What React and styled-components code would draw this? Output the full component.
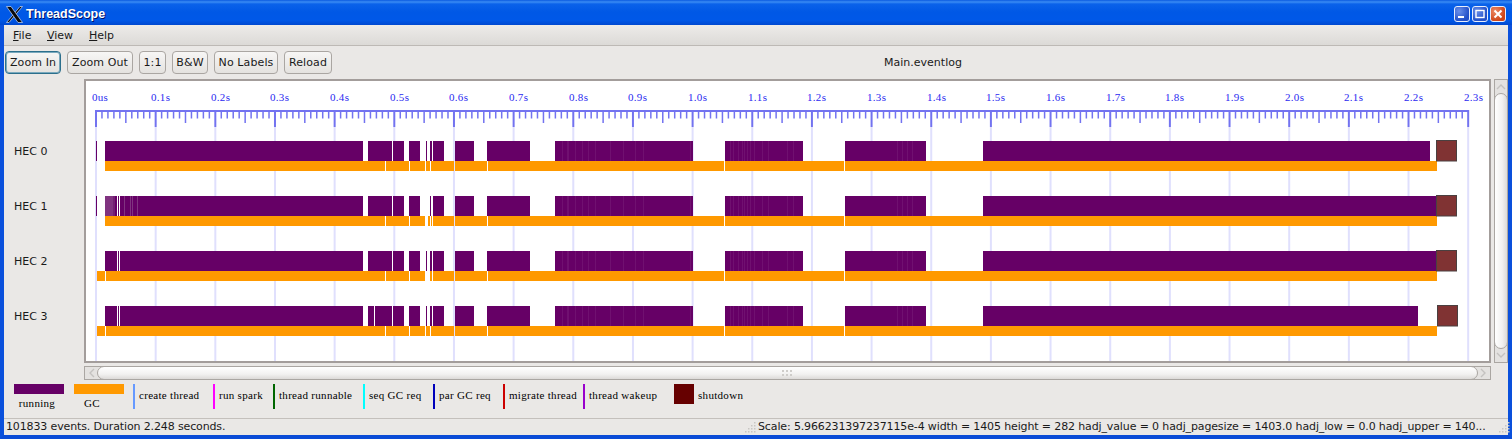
import React from 'react';
import styled, { createGlobalStyle } from 'styled-components';

const GlobalStyle = createGlobalStyle`
  html, body { margin: 0; padding: 0; background: #eae8e6; overflow: hidden; }
`;

const Window = styled.div`
  width: 1512px;
  height: 439px;
  box-sizing: border-box;
  display: flex;
  flex-direction: column;
  font-family: "DejaVu Sans", sans-serif;
  font-size: 11px;
  color: #1a1a1a;
  background: #eae8e6;
  border-left: 4px solid #0a50dc;
  border-right: 4px solid #0a50dc;
  border-bottom: 4px solid #0a4bd6;
`;

const TitleBar = styled.div`
  height: 25px;
  margin: 0 -4px;
  flex: none;
  box-sizing: border-box;
  display: flex;
  align-items: center;
  padding: 3px 6px 0;
  gap: 3px;
  background: linear-gradient(#0a5ae0 0, #3a8cf4 2px, #0a62ea 4px, #0058e6 12px, #0058e8 20px, #0048d0 25px);
`;

const WindowTitle = styled.div`
  flex: 1;
  color: #fff;
  font-family: "Liberation Sans", sans-serif;
  font-weight: bold;
  font-size: 12.5px;
  text-shadow: 1px 1px 0 #00126a;
`;

const WinButtons = styled.div`
  display: flex;
  gap: 2px;
`;

const WinButton = styled.div`
  width: 16px;
  height: 16px;
  box-sizing: border-box;
  border: 1px solid #e8eefc;
  border-radius: 3px;
  display: flex;
  align-items: center;
  justify-content: center;
  background: ${(p) => (p.$close
    ? 'radial-gradient(circle at 30% 30%, #ec8a66, #cf4518 70%)'
    : 'radial-gradient(circle at 30% 30%, #6a90ea, #2350c8 70%)')};
`;

const MenuBar = styled.div`
  height: 21px;
  flex: none;
  box-sizing: border-box;
  display: flex;
  align-items: center;
  padding-left: 9px;
  background: linear-gradient(#edebe9, #dcdad7);
  border-bottom: 1px solid #bdb9b5;
`;

const MenuItem = styled.div`
  width: ${(p) => p.$w}px;
  u { text-underline-offset: 1px; }
`;

const ToolBar = styled.div`
  height: 33px;
  flex: none;
  box-sizing: border-box;
  display: flex;
  align-items: center;
  gap: 6px;
  padding-left: 1px;
`;

const ToolButton = styled.button`
  height: 23px;
  width: ${(p) => p.$w}px;
  padding: 0;
  box-sizing: border-box;
  font: 11px "DejaVu Sans", sans-serif;
  letter-spacing: 0.1px;
  color: #1a1a1a;
  border-radius: 4px;
  background: linear-gradient(#f7f6f5, #e4e2df);
  border: 1px solid ${(p) => (p.$focused ? '#2c6f8c' : '#aaa6a2')};
  box-shadow: ${(p) => (p.$focused ? '0 0 0 1px #7aa9bd inset' : 'none')};
`;

const FileName = styled.div`
  flex: 1;
  text-align: center;
`;

const ChartRow = styled.div`
  height: 284px;
  flex: none;
  display: flex;
`;

const RowLabels = styled.div`
  width: 80px;
  flex: none;
  box-sizing: border-box;
  padding: 45px 0 0 10px;
`;

const RowLabel = styled.div`
  height: 55px;
  line-height: 55px;
`;

const ChartFrame = styled.div`
  width: 1407px;
  height: 284px;
  box-sizing: border-box;
  border: 2px solid #a39d9b;
  background: #fff;
  flex: none;
  svg { display: block; }
`;

const VScroll = styled.div`
  width: 14px;
  height: 284px;
  margin-left: 3px;
  box-sizing: border-box;
  border: 1px solid #aaa6a2;
  flex: none;
  position: relative;
  background: #e4e2e0;
`;

const VThumb = styled.div`
  position: absolute;
  left: -1px;
  right: -1px;
  top: 13px;
  bottom: 13px;
  border: 1px solid #aaa6a2;
  border-radius: 7px;
  background: linear-gradient(90deg, #fff, #f2f1f0 60%, #dcdad8);
`;

const HScrollRow = styled.div`
  flex: none;
  padding: 3px 0 0 80px;
`;

const HScroll = styled.div`
  width: 1407px;
  height: 14px;
  box-sizing: border-box;
  border: 1px solid #aaa6a2;
  position: relative;
  background: #e4e2e0;
`;

const HThumb = styled.div`
  position: absolute;
  top: -1px;
  bottom: -1px;
  left: 12px;
  right: 12px;
  border: 1px solid #aaa6a2;
  border-radius: 7px;
  background: linear-gradient(#fff, #f2f1f0 60%, #dcdad8);
  display: flex;
  align-items: center;
  justify-content: center;
`;

const Chevron = styled.svg`
  position: absolute;
  top: ${(p) => p.$top};
  left: ${(p) => p.$left};
  right: ${(p) => p.$right};
  bottom: ${(p) => p.$bottom};
`;

const Legend = styled.div`
  height: 38px;
  flex: none;
  box-sizing: border-box;
  display: flex;
  padding: 4px 0 0 10px;
  font-family: "Liberation Serif", serif;
  font-size: 11px;
  letter-spacing: 0.3px;
  color: #000;
`;

const Swatch = styled.div`
  width: 50px;
  margin-right: 10px;
  box-sizing: border-box;
  padding: 0 ${(p) => p.$indent || 0}px 0 0;
  text-align: center;
  line-height: 13px;
  &::before {
    content: "";
    display: block;
    width: 50px;
    height: 10px;
    background: ${(p) => p.$color};
    margin-bottom: 3px;
  }
`;

const Marker = styled.div`
  width: ${(p) => p.$w}px;
  height: 25px;
  box-sizing: border-box;
  border-left: 2px solid ${(p) => p.$color};
  padding-left: 4px;
  line-height: 22px;
  margin-left: ${(p) => p.$offset || 0}px;
  white-space: nowrap;
`;

const ShutdownKey = styled.div`
  display: flex;
  gap: 4px;
  line-height: 22px;
  &::before {
    content: "";
    width: 20px;
    height: 20px;
    background: #660000;
  }
`;

const StatusBar = styled.div`
  height: 17px;
  flex: none;
  box-sizing: border-box;
  display: flex;
  align-items: center;
  border-top: 1px solid #c4c0bc;
  padding: 0 0 1px 2px;
  letter-spacing: -0.13px;
  white-space: nowrap;
`;

const StatusLeft = styled.div`
  width: 738px;
  flex: none;
`;

const StatusRight = styled.div`
  width: 740px;
  flex: none;
  margin-left: 2px;
`;

const Grip = styled.svg`
  flex: none;
`;

// bars in page pixels: [from, to]
const commonEnd = [[455, 474], [487, 530], [555, 693], [725, 803], [845, 926]];
const purple = [
  [[96, 97], [105, 363], [368, 392], [393, 404], [409, 420], [426, 427], [430, 432], [433, 444], ...commonEnd, [983, 1430]],
  [[96, 97], [120, 363], [368, 392], [393, 404], [409, 420], [430, 431], [433, 444], ...commonEnd, [983, 1437]],
  [[105, 117], [118, 119], [120, 363], [368, 392], [393, 404], [409, 420], [426, 427], [430, 432], [433, 444], ...commonEnd, [983, 1437]],
  [[105, 117], [118, 119], [120, 363], [368, 374], [375, 392], [393, 404], [409, 420], [426, 427], [430, 432], [433, 444], ...commonEnd, [983, 1418]],
];

const orangeTail = [[455, 487], [488, 724], [725, 844], [845, 1437]];
const orange = [
  [[105, 385], [386, 409], [410, 425], [426, 430], [431, 454], ...orangeTail],
  [[105, 385], [386, 409], [410, 425], [428, 430], [431, 432], [433, 454], ...orangeTail],
  [[97, 105], [106, 385], [386, 409], [410, 425], [430, 432], [433, 454], ...orangeTail],
  [[97, 105], [106, 385], [386, 409], [410, 425], [426, 430], [431, 454], ...orangeTail],
];

const streaks = [562, 567, 568, 575, 582, 588, 595, 610, 623, 635, 643, 690, 730, 733, 738, 742, 744, 747, 750, 754, 762, 768, 787, 793, 897, 902, 907, 912];
const rowTops = [141, 196, 251, 306];
const shutdownX = [1436, 1436, 1436, 1437];
const ticks = Array.from({ length: 231 }, (_, i) => i);
const tickX = (i) => 96 + i * 5.966;
const tickLabel = (i) => (i === 0 ? '0us' : `${(i / 100).toFixed(1)}s`);

function Timeline() {
  return (
    <svg width="1403" height="280" viewBox="86 81 1403 280">
      {ticks.filter((i) => i % 10 === 0).map((i) => (
        <g key={i}>
          <rect x={tickX(i) - 1} y="127" width="2" height="240" fill="#e0e0fd" />
          <text x={Math.floor(tickX(i)) - 4} y="101" fontFamily="Liberation Serif, serif" fontSize="11" letterSpacing="0.3" fill="#2a2af0">
            {tickLabel(i)}
          </text>
        </g>
      ))}
      <rect x="95" y="110" width="1374" height="2" fill="#7373f0" />
      {ticks.map((i) => {
        const major = i % 10 === 0;
        const end = major ? 127 : i % 5 === 0 ? 123 : 118.5;
        return <rect key={i} x={tickX(i) - (major ? 1 : 0.75)} y="110" width={major ? 2 : 1.5} height={end - 110} fill="#7373f0" />;
      })}
      {rowTops.map((top, r) => (
        <g key={top}>
          {purple[r].map(([a, b]) => <rect key={a} x={a} y={top} width={b - a} height="20" fill="#660066" />)}
          {r === 1 && (
            <>
              <rect x="105" y={top} width="8" height="20" fill="#803380" />
              <rect x="113" y={top} width="2" height="20" fill="#732073" />
              <rect x="115" y={top} width="2" height="20" fill="#660066" />
              <rect x="118" y={top} width="1" height="20" fill="#660066" />
              {[124, 130, 132, 137].map((x) => <rect key={x} x={x} y={top} width="1" height="20" fill="#803380" />)}
            </>
          )}
          {streaks.map((x) => <rect key={x} x={x} y={top} width="1" height="20" fill="#701070" />)}
          {orange[r].map(([a, b]) => <rect key={a} x={a} y={top + 20} width={b - a} height="10" fill="#ff9900" />)}
          <rect x={shutdownX[r] + 0.5} y={top - 0.5} width="20" height="20.5" fill="#803333" stroke="#4a4040" />
        </g>
      ))}
    </svg>
  );
}

const chevronProps = { width: 10, height: 8, fill: 'none', stroke: '#c4c2c0', strokeWidth: 1.4 };
const gripDots = [[10, 2], [7, 5], [10, 5], [4, 8], [7, 8], [10, 8], [1, 11], [4, 11], [7, 11], [10, 11]];

function ResizeGrip() {
  return (
    <Grip width="12" height="12" viewBox="0 0 12 12" fill="#c8c6c3">
      {gripDots.map(([x, y]) => <rect key={`${x}-${y}`} x={x} y={y - 1} width="1.5" height="1.5" />)}
    </Grip>
  );
}

export default function App() {
  return (
    <Window>
      <GlobalStyle />
      <TitleBar>
        <svg width="17" height="17" viewBox="0 0 17 17">
          <g fill="#0a0a0a" stroke="#cfdcf6" strokeWidth="0.7">
            <path d="M14 0.5H16.5L3 16.5H0.5Z" />
            <path d="M0.5 0.5H5L16.5 16.5H12Z" />
          </g>
        </svg>
        <WindowTitle>ThreadScope</WindowTitle>
        <WinButtons>
          <WinButton>
            <svg width="10" height="10" viewBox="0 0 10 10"><rect x="1" y="7" width="6" height="2" fill="#fff" /></svg>
          </WinButton>
          <WinButton>
            <svg width="10" height="10" viewBox="0 0 10 10"><rect x="1" y="1.5" width="8" height="7" fill="none" stroke="#fff" strokeWidth="1.4" /></svg>
          </WinButton>
          <WinButton $close>
            <svg width="10" height="10" viewBox="0 0 10 10"><path d="M1.5 1.5L8.5 8.5M8.5 1.5L1.5 8.5" stroke="#fff" strokeWidth="2" /></svg>
          </WinButton>
        </WinButtons>
      </TitleBar>
      <MenuBar>
        <MenuItem $w={34}><u>F</u>ile</MenuItem>
        <MenuItem $w={42}><u>V</u>iew</MenuItem>
        <MenuItem $w={40}><u>H</u>elp</MenuItem>
      </MenuBar>
      <ToolBar>
        <ToolButton $w={56} $focused>Zoom In</ToolButton>
        <ToolButton $w={66}>Zoom Out</ToolButton>
        <ToolButton $w={27}>1:1</ToolButton>
        <ToolButton $w={36}>B&amp;W</ToolButton>
        <ToolButton $w={64}>No Labels</ToolButton>
        <ToolButton $w={48}>Reload</ToolButton>
        <FileName>Main.eventlog</FileName>
      </ToolBar>
      <ChartRow>
        <RowLabels>
          <RowLabel>HEC 0</RowLabel>
          <RowLabel>HEC 1</RowLabel>
          <RowLabel>HEC 2</RowLabel>
          <RowLabel>HEC 3</RowLabel>
        </RowLabels>
        <ChartFrame><Timeline /></ChartFrame>
        <VScroll>
          <Chevron {...chevronProps} $top="3px" $left="1px" viewBox="0 0 10 8"><path d="M1 6L5 2L9 6" /></Chevron>
          <VThumb />
          <Chevron {...chevronProps} $bottom="3px" $left="1px" viewBox="0 0 10 8"><path d="M1 2L5 6L9 2" /></Chevron>
        </VScroll>
      </ChartRow>
      <HScrollRow>
        <HScroll>
          <Chevron width="8" height="10" fill="none" stroke="#c4c2c0" strokeWidth="1.4" $top="1px" $left="3px" viewBox="0 0 8 10"><path d="M6 1L2 5L6 9" /></Chevron>
          <HThumb>
            <svg width="11" height="7" viewBox="0 0 11 7" fill="#cfcdca">
              {[0, 4, 8].map((x) => (
                <g key={x}>
                  <rect x={x} y="0" width="2" height="2" />
                  <rect x={x} y="4" width="2" height="2" />
                </g>
              ))}
            </svg>
          </HThumb>
          <Chevron width="8" height="10" fill="none" stroke="#c4c2c0" strokeWidth="1.4" $top="1px" $right="3px" viewBox="0 0 8 10"><path d="M2 1L6 5L2 9" /></Chevron>
        </HScroll>
      </HScrollRow>
      <Legend>
        <Swatch $color="#660066" $indent={4}>running</Swatch>
        <Swatch $color="#ff9900" $indent={14}>GC</Swatch>
        <Marker $w={80} $offset={-1} $color="#6699ff">create thread</Marker>
        <Marker $w={60} $color="#ff00ff">run spark</Marker>
        <Marker $w={90} $color="#006600">thread runnable</Marker>
        <Marker $w={70} $color="#00ffff">seq GC req</Marker>
        <Marker $w={70} $color="#0000bb">par GC req</Marker>
        <Marker $w={80} $color="#cc0000">migrate thread</Marker>
        <Marker $w={91} $color="#9900cc">thread wakeup</Marker>
        <ShutdownKey>shutdown</ShutdownKey>
      </Legend>
      <StatusBar>
        <StatusLeft>101833 events. Duration 2.248 seconds.</StatusLeft>
        <ResizeGrip />
        <StatusRight>Scale: 5.966231397237115e-4 width = 1405 height = 282 hadj_value = 0 hadj_pagesize = 1403.0 hadj_low = 0.0 hadj_upper = 140...</StatusRight>
        <ResizeGrip />
      </StatusBar>
    </Window>
  );
}
